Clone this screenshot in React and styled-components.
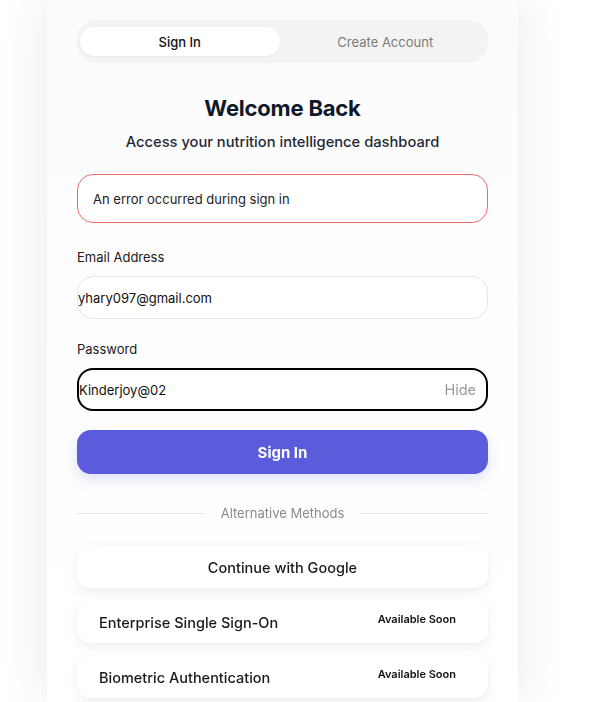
import React, { useState } from "react";
import styled, { createGlobalStyle } from "styled-components";

const GlobalStyle = createGlobalStyle`
  html, body {
    margin: 0;
    padding: 0;
    background: #ffffff;
    font-family: Inter, "Noto Sans", sans-serif;
    overflow: hidden;
  }
`;

const Page = styled.div`
  height: 702px;
  padding-left: 47px;
  box-sizing: border-box;
`;

const Card = styled.div`
  width: 471px;
  height: 702px;
  box-sizing: border-box;
  padding: 20px 30px 0;
  background: linear-gradient(180deg, #fbfbfb 0%, #fdfdfd 30%, #ffffff 100%);
  box-shadow: 0 0 50px rgba(0, 0, 0, 0.09);
  display: flex;
  flex-direction: column;
`;

const Tabs = styled.div`
  display: grid;
  grid-template-columns: 1fr 1fr;
  gap: 6px;
  height: 43px;
  padding: 7px 3px;
  box-sizing: border-box;
  background: #f3f3f3;
  border-radius: 20px;
`;

const Tab = styled.button`
  border: none;
  border-radius: 16px;
  font-family: inherit;
  font-size: 13px;
  font-weight: ${(p) => (p.$active ? 500 : 400)};
  background: ${(p) => (p.$active ? "#ffffff" : "transparent")};
  color: ${(p) => (p.$active ? "#111111" : "#7b7b7b")};
  box-shadow: ${(p) => (p.$active ? "0 1px 2px rgba(0,0,0,0.04)" : "none")};
  padding: 0;
`;

const Title = styled.h1`
  margin: 32px 0 0;
  text-align: center;
  font-size: 22px;
  font-weight: 700;
  color: #111827;
  letter-spacing: -0.2px;
`;

const Subtitle = styled.p`
  margin: 12px 0 0;
  text-align: center;
  font-size: 14.7px;
  font-weight: 500;
  color: #1f2937;
`;

const ErrorBox = styled.div`
  margin-top: 23px;
  height: 49px;
  box-sizing: border-box;
  border: 1px solid #f26b6b;
  border-radius: 16px;
  background: #ffffff;
  display: flex;
  align-items: center;
  padding-left: 15px;
  font-size: 13px;
  color: #222222;
`;

const Field = styled.div`
  display: flex;
  flex-direction: column;
  margin-top: ${(p) => p.$top}px;
`;

const Label = styled.label`
  font-size: 13px;
  color: #1a1a1a;
  margin-bottom: 11px;
`;

const InputWrap = styled.div`
  height: 43px;
  box-sizing: border-box;
  border: ${(p) => (p.$focus ? "2px solid #000000" : "1px solid #e5e5e5")};
  border-radius: 16px;
  background: #ffffff;
  display: flex;
  align-items: center;
  padding-right: 10px;
`;

const Input = styled.input`
  flex: 1;
  border: none;
  outline: none;
  background: transparent;
  font-family: inherit;
  font-size: 13px;
  color: #111111;
  padding: 0;
  min-width: 0;
  caret-color: #000;
`;

const Toggle = styled.button`
  border: none;
  background: none;
  padding: 0;
  font-family: inherit;
  font-size: 14.5px;
  color: #9a9a9a;
`;

const Primary = styled.button`
  margin-top: 19px;
  height: 44px;
  border: none;
  border-radius: 14px;
  background: #5a5cdb;
  color: #ffffff;
  font-family: inherit;
  font-size: 15px;
  font-weight: 700;
  box-shadow: 0 6px 14px rgba(90, 92, 219, 0.18);
`;

const Divider = styled.div`
  margin-top: 31px;
  display: flex;
  align-items: center;
  gap: 16px;
  font-size: 13px;
  color: #8a8a8a;

  &::before,
  &::after {
    content: "";
    flex: 1;
    height: 1px;
    background: #e4e4e4;
  }
`;

const Methods = styled.div`
  margin-top: 25px;
  display: flex;
  flex-direction: column;
  gap: 13px;
`;

const Method = styled.div`
  height: 42px;
  box-sizing: border-box;
  border-radius: 14px;
  background: #ffffff;
  box-shadow: 0 4px 12px rgba(0, 0, 0, 0.07);
  display: flex;
  align-items: center;
  justify-content: ${(p) => (p.$center ? "center" : "space-between")};
  padding: ${(p) => (p.$center ? "0" : "0 32px 0 22px")};
  font-size: 14.5px;
  font-weight: 500;
  color: #1a1a1a;
`;

const Soon = styled.span`
  font-size: 11px;
  font-weight: 600;
  color: #111111;
  margin-top: -6px;
`;

export default function App() {
  const [show, setShow] = useState(true);
  return (
    <>
      <GlobalStyle />
      <Page>
        <Card>
          <Tabs>
            <Tab $active>Sign In</Tab>
            <Tab>Create Account</Tab>
          </Tabs>
          <Title>Welcome Back</Title>
          <Subtitle>Access your nutrition intelligence dashboard</Subtitle>
          <ErrorBox>An error occurred during sign in</ErrorBox>
          <Field $top={26}>
            <Label>Email Address</Label>
            <InputWrap>
              <Input defaultValue="yhary097@gmail.com" />
            </InputWrap>
          </Field>
          <Field $top={22}>
            <Label>Password</Label>
            <InputWrap $focus>
              <Input
                type={show ? "text" : "password"}
                defaultValue="Kinderjoy@02"
                autoFocus
              />
              <Toggle onClick={() => setShow(!show)}>{show ? "Hide" : "Show"}</Toggle>
            </InputWrap>
          </Field>
          <Primary>Sign In</Primary>
          <Divider>Alternative Methods</Divider>
          <Methods>
            <Method $center>Continue with Google</Method>
            <Method>
              Enterprise Single Sign-On
              <Soon>Available Soon</Soon>
            </Method>
            <Method>
              Biometric Authentication
              <Soon>Available Soon</Soon>
            </Method>
          </Methods>
        </Card>
      </Page>
    </>
  );
}
